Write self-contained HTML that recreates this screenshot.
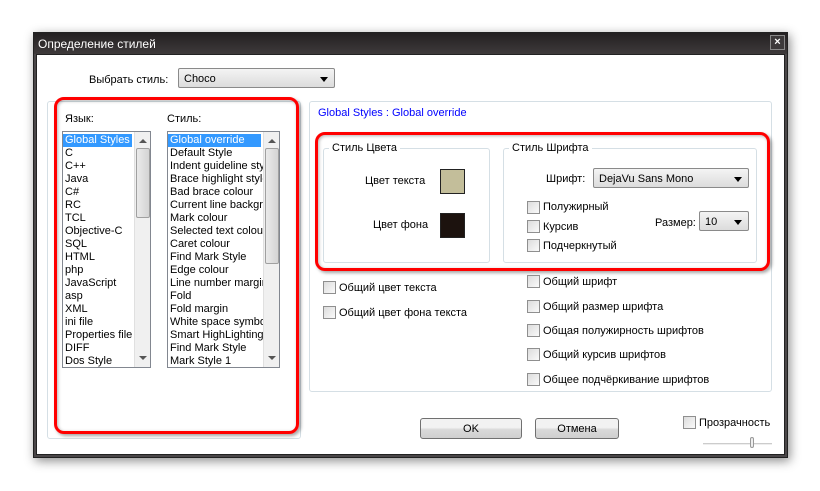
<!DOCTYPE html>
<html><head><meta charset="utf-8"><style>
*{box-sizing:border-box;margin:0;padding:0}
body{width:820px;height:491px;background:#fff;position:relative;overflow:hidden;font-family:"Liberation Sans","DejaVu Sans",sans-serif;font-size:11px;color:#000}
.a{position:absolute}
.t{margin-top:2px}
.win{left:33px;top:32px;width:755px;height:426px;background:#4a4648;border:1px solid #222;box-shadow:2px 3px 10px rgba(0,0,0,.45)}
.title{left:34px;top:33px;width:753px;height:21px;background:linear-gradient(#232021,#3e3a3b);color:#fff;font-size:12px;padding:4px 0 0 4px}
.client{left:36px;top:54px;width:749px;height:401px;background:#fff;border:1px solid #222}
.x{left:770px;top:35px;width:15px;height:15px;border:1px solid #888;background:#3c393a;color:#fff;font-size:11px;text-align:center;line-height:13px;font-weight:bold}
.combo{background:linear-gradient(#f4f4f4,#dcdcdc);border:1px solid #8a8a8a;border-radius:2px;padding:4px 0 0 5px}
.combo:after{content:"";position:absolute;right:6px;top:8px;border:4px solid transparent;border-top:5px solid #000}
.list{background:#fff;border:1px solid #828790;overflow:hidden;padding-top:2px}
.list div{height:13px;line-height:13px;padding-left:2px;white-space:nowrap;font-size:11px}
.sel{background:#3399ff;color:#fff}
.list .sb{position:absolute;right:0;top:0;width:16px;height:100%;background:#f0f0f0;border-left:1px solid #e0e0e0;padding:0}
.list .thumb{position:absolute;left:1px;width:14px;height:auto;background:linear-gradient(90deg,#eaeaea,#d4d4d4);border:1px solid #a0a0a0;border-radius:2px}
.list .up,.list .dn{position:absolute;left:4px;width:0;height:0;padding:0;border:4px solid transparent}
.list .up{top:3px;border-bottom:4px solid #555}
.list .dn{bottom:3px;border-top:4px solid #555}
.grp{border:1px solid #d5dfe5;border-radius:3px}
.red{border:3px solid #f00;border-radius:10px;box-shadow:2px 2px 3px rgba(0,0,0,.35),inset 1px 1px 3px rgba(0,0,0,.3)}
.cb{width:13px;height:13px;border:1px solid #8f8f8f;background:linear-gradient(135deg,#dcdcdc,#fafafa)}
.btn{border:1px solid #707070;border-radius:3px;background:linear-gradient(#f2f2f2 45%,#dadada 55%,#cfcfcf);text-align:center;line-height:21px}
.lg{background:#fff;padding:0 3px}
</style></head><body>
<div class="a win"></div>
<div class="a title">Определение стилей</div>
<div class="a x">×</div>
<div class="a client"></div>

<div class="a" style="left:89px;top:74px">Выбрать стиль:</div>
<div class="a combo" style="left:178px;top:68px;width:157px;height:20px">Choco</div>

<div class="a grp" style="left:47px;top:101px;width:254px;height:338px"></div>
<div class="a red" style="left:54px;top:97px;width:245px;height:337px"></div>
<div class="a" style="left:65px;top:113px">Язык:</div>
<div class="a" style="left:167px;top:113px">Стиль:</div>
<div class="a list" style="left:62px;top:131px;width:89px;height:237px">
<div class="sel" style="width:69px">Global Styles</div><div>C</div><div>C++</div><div>Java</div><div>C#</div><div>RC</div><div>TCL</div><div>Objective-C</div><div>SQL</div><div>HTML</div><div>php</div><div>JavaScript</div><div>asp</div><div>XML</div><div>ini file</div><div>Properties file</div><div>DIFF</div><div>Dos Style</div>
<div class="sb"><div class="up"></div><div class="thumb" style="top:16px;height:70px"></div><div class="dn"></div></div></div>
<div class="a list" style="left:167px;top:131px;width:113px;height:237px">
<div class="sel" style="width:93px">Global override</div><div>Default Style</div><div>Indent guideline sty</div><div>Brace highlight style</div><div>Bad brace colour</div><div>Current line backgr</div><div>Mark colour</div><div>Selected text colour</div><div>Caret colour</div><div>Find Mark Style</div><div>Edge colour</div><div>Line number margin</div><div>Fold</div><div>Fold margin</div><div>White space symbo</div><div>Smart HighLighting</div><div>Find Mark Style</div><div>Mark Style 1</div>
<div class="sb"><div class="up"></div><div class="thumb" style="top:16px;height:116px"></div><div class="dn"></div></div></div>

<div class="a grp" style="left:309px;top:101px;width:463px;height:291px"></div>
<div class="a" style="left:318px;top:107px;color:#0000ff">Global Styles : Global override</div>
<div class="a red" style="left:315px;top:132px;width:455px;height:139px"></div>
<div class="a grp" style="left:323px;top:148px;width:167px;height:115px"></div>
<div class="a lg" style="left:329px;top:142px">Стиль Цвета</div>
<div class="a" style="left:365px;top:175px">Цвет текста</div>
<div class="a" style="left:440px;top:169px;width:25px;height:25px;background:#c3be9a;border:1px solid #222"></div>
<div class="a" style="left:373px;top:219px">Цвет фона</div>
<div class="a" style="left:440px;top:213px;width:25px;height:25px;background:#1c120e;border:1px solid #222"></div>

<div class="a grp" style="left:503px;top:148px;width:254px;height:115px"></div>
<div class="a lg" style="left:509px;top:142px">Стиль Шрифта</div>
<div class="a" style="left:546px;top:173px">Шрифт:</div>
<div class="a combo" style="left:593px;top:168px;width:156px;height:20px">DejaVu Sans Mono</div>
<div class="a cb" style="left:527px;top:201px"></div><div class="a" style="left:543px;top:201px">Полужирный</div>
<div class="a cb" style="left:527px;top:220px"></div><div class="a" style="left:543px;top:221px">Курсив</div>
<div class="a cb" style="left:527px;top:239px"></div><div class="a" style="left:543px;top:240px">Подчеркнутый</div>
<div class="a" style="left:655px;top:217px">Размер:</div>
<div class="a combo" style="left:699px;top:211px;width:50px;height:20px">10</div>

<div class="a cb" style="left:323px;top:281px"></div><div class="a" style="left:339px;top:282px">Общий цвет текста</div>
<div class="a cb" style="left:323px;top:306px"></div><div class="a" style="left:339px;top:307px">Общий цвет фона текста</div>
<div class="a cb" style="left:527px;top:275px"></div><div class="a" style="left:543px;top:276px">Общий шрифт</div>
<div class="a cb" style="left:527px;top:300px"></div><div class="a" style="left:543px;top:301px">Общий размер шрифта</div>
<div class="a cb" style="left:527px;top:324px"></div><div class="a" style="left:543px;top:325px">Общая полужирность шрифтов</div>
<div class="a cb" style="left:527px;top:348px"></div><div class="a" style="left:543px;top:349px">Общий курсив шрифтов</div>
<div class="a cb" style="left:527px;top:373px"></div><div class="a" style="left:543px;top:374px">Общее подчёркивание шрифтов</div>

<div class="a btn" style="left:420px;top:418px;width:102px;height:21px">OK</div>
<div class="a btn" style="left:535px;top:418px;width:84px;height:21px">Отмена</div>
<div class="a cb" style="left:683px;top:416px"></div><div class="a" style="left:699px;top:417px">Прозрачность</div>
<div class="a" style="left:703px;top:443px;width:69px;height:2px;background:#ccc;border-bottom:1px solid #eee"></div>
<div class="a" style="left:750px;top:437px;width:4px;height:11px;background:#eee;border:1px solid #999;border-radius:2px"></div>
</body></html>
